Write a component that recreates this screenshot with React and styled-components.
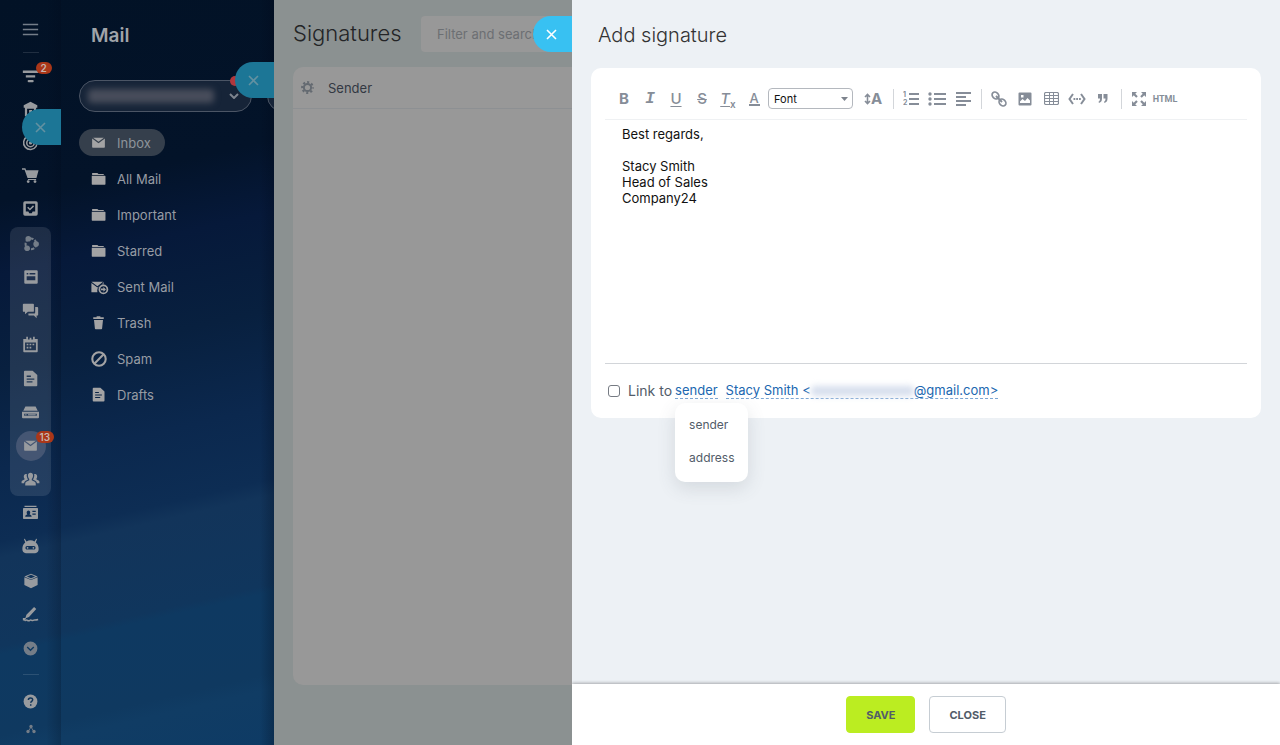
import React from 'react'

// package
import styled, { createGlobalStyle, css } from 'styled-components';


const sans = `Inter, "Liberation Sans", sans-serif`;

// left menu icons, all on a 20 x 20 grid
const icons = {
  menu: <path d="M1 4h18M1 10h18M1 16h18" stroke="currentColor" strokeWidth="1.8" fill="none" />,
  filter: <path d="M1 3h18v2.8H1zM4.500 8.500h11v2.600h-11zM8 14h4.400a1.300 1.300 0 0 1 0 2.800H8a1.300 1.300 0 0 1 0-2.800z" />,
  office: <path d="M10 1l8 4v3h-1.4v10H3.4V8H2V5zM6 9v7h8V9zM8.4 10.5h3.4v5.5H8.4z" fillRule="evenodd" />,
  target: (
    <g fill="none" stroke="currentColor" strokeWidth="1.8">
      <path d="M13.5 3A8 8 0 1 0 17.4 7.4" />
      <circle cx="10" cy="10.500" r="4.400" />
      <circle cx="10" cy="10.500" r="1" />
      <path d="M10 10.500L17 3.500M15 2v3.500h3.500" />
    </g>
  ),
  cart: <path d="M0 1.500h4l.8 2.200H19.500L17 13H6.500L3 3.300H0zM7 14h9.600v1.400H7zM5.600 17.200a1.700 1.700 0 1 1 3.400 0 1.700 1.700 0 0 1-3.400 0zM13.600 17.200a1.700 1.700 0 1 1 3.400 0 1.700 1.700 0 0 1-3.400 0z" />,
  tasks: <path d="M3.500 1.500h13a2 2 0 0 1 2 2v13a2 2 0 0 1-2 2h-13a2 2 0 0 1-2-2v-13a2 2 0 0 1 2-2zM4.500 4.500v9h3l1 2h3l1-2h3v-9zM7.300 8l2 2 3.700-3.700 1.200 1.200-4.900 4.900-3.200-3.200z" fillRule="evenodd" />,
  collab: (
    <g>
      <circle cx="10.500" cy="10.500" r="6.300" fill="none" stroke="currentColor" strokeWidth="2.400" strokeDasharray="4 1.600" />
      <circle cx="7.400" cy="4.400" r="3.300" />
      <circle cx="16.600" cy="10.600" r="3.300" />
      <circle cx="6" cy="15.600" r="3.300" />
    </g>
  ),
  feed: <path d="M3 1.500h14a1.400 1.400 0 0 1 1.400 1.400v14.200a1.400 1.400 0 0 1-1.400 1.400H3a1.400 1.400 0 0 1-1.400-1.400V2.900A1.400 1.400 0 0 1 3 1.500zM4.600 5v1.800h2V5zm3.600 0v1.800h7.200V5zM4.600 9v5h10.800V9z" fillRule="evenodd" />,
  chat: <path d="M2 2h11a1 1 0 0 1 1 1v7.500a1 1 0 0 1-1 1H7L3.500 14.500v-3H2a1 1 0 0 1-1-1V3a1 1 0 0 1 1-1zM15.500 6H18a1 1 0 0 1 1 1v8a1 1 0 0 1-1 1h-.800v3L14 16H8.500a1 1 0 0 1-1-1v-1.600h7a1 1 0 0 0 1-1z" />,
  calendar: <path d="M5 1h2v3h2V2h2v2h2V1h2v2.500h3.500V18a1 1 0 0 1-1 1h-15a1 1 0 0 1-1-1V3.500H5zM3.600 7.500v9.400h12.800V7.500zM5.500 9h2v2h-2zm3.400 0h2v2h-2zm3.500 0h2v2h-2zM5.500 12.600h2v2h-2zm3.400 0h2v2h-2z" fillRule="evenodd" />,
  doc: <path d="M3.500 1h9L18 6v12a1.200 1.200 0 0 1-1.200 1.200H3.500A1.200 1.200 0 0 1 2.300 18V2.200A1.200 1.200 0 0 1 3.500 1zM5.500 6.600v1.500h5V6.600zm0 3.300v1.500h9V9.900zm0 3.400v1.500h6.800v-1.500z" fillRule="evenodd" />,
  drive: <path d="M4 3h12l2.500 5h-17zM0 9h20v6.500a1.200 1.200 0 0 1-1.200 1.200H1.200A1.200 1.200 0 0 1 0 15.500zm2.600 2.400v2.400h14.800v-2.400zm1.200.6h1.500v1.200H3.800zm3.300 0h9v1.200h-9z" fillRule="evenodd" />,
  mail: <path d="M1.500 4.500L10 11l8.500-6.500V16a1 1 0 0 1-1 1h-15a1 1 0 0 1-1-1zM2.800 3.500h14.400L10 9z" />,
  people: <path d="M7 5.200C7 3 8.200 2 10 2s3 1 3 3.200c0 1.800-.7 3.300-1.500 4.100v1.500l3.500 1.900c.8.500 1.200 1.300 1.200 2.300v2H3.800v-2c0-1 .4-1.800 1.200-2.300l3.500-1.900V9.300C7.700 8.500 7 7 7 5.200zM5.700 3.600c-.5 2.200.1 4.700 1.400 6.300L4 11.700c-1 .6-1.500 1.500-1.600 2.700H-.5v-1.700c0-.7.4-1.300 1-1.600l2.400-1.200V8.700C1.800 7.600 1.700 3.700 4.400 3.400zM14.300 3.600c.5 2.200-.1 4.700-1.400 6.300l3.100 1.800c1 .6 1.500 1.500 1.600 2.700h2.900v-1.700c0-.7-.4-1.300-1-1.600l-2.400-1.200V8.700c1.100-1.100 1.200-5-1.500-5.300z" />,
  contact: <path d="M2 1h16v1.800H2zM1 4h18a1 1 0 0 1 1 1v12.500a1 1 0 0 1-1 1H1a1 1 0 0 1-1-1V5a1 1 0 0 1 1-1zM3 15.500h8.500c0-2-1-2.300-2.800-3 1.700-1.800 1-5.300-1.400-5.300S4.100 10.700 5.800 12.500c-1.800.700-2.800 1-2.800 3zM12.500 7.500v1.800H17V7.500zm0 3.800v1.800H17v-1.800z" fillRule="evenodd" />,
  robot: <path d="M3.300.800l2 3.400a9 9 0 0 1 9.400 0l2-3.400 1 .5-1.500 4.100c2.200 1.800 3.400 4.600 3.400 7.600 0 3-1.600 4.800-4.100 4.800h-11C2 17.800.400 16 .400 13c0-3 1.200-5.800 3.400-7.600L2.300 1.300zM6 9.400c-2.600 0-2.600 4.200 0 4.200h8c2.600 0 2.600-4.200 0-4.200zm.6 1.100a1 1 0 1 1 0 2 1 1 0 0 1 0-2zm6.800 0a1 1 0 1 1 0 2 1 1 0 0 1 0-2z" fillRule="evenodd" />,
  box: <path d="M10 1l8.300 3.300L10 8 1.700 4.300zM10 2.200L4.800 4.300 10 6.600l5.200-2.300zM1.700 5.200L10 8.900l8.300-3.700v9.800L10 19l-8.300-4z" fillRule="evenodd" />,
  sign: (
    <g>
      <path d="M14.200 1.200l2.600 2.400-8.600 9.200-4.400 1.800 1.400-4.200zM1 14h4l-2 3H1z" />
      <path d="M3 17.500c3-3 4 1.500 6-.500s2.500 1 4 0 2 .200 6-1" stroke="currentColor" strokeWidth="1.800" fill="none" />
    </g>
  ),
  more: <path d="M10 .800a9.200 9.200 0 1 1 0 18.400A9.200 9.200 0 0 1 10 .800zM6.200 7.300L5 8.600l5 4.900 5-4.900-1.200-1.300L10 11z" fillRule="evenodd" />,
  help: (
    <g>
      <circle cx="10" cy="10" r="9.200" />
      <path d="M7.200 8c0-3.800 5.800-3.600 5.700-.3 0 2-2.600 2.100-2.600 4.100M10.300 13.600v2.200" stroke="#0f3459" strokeWidth="2" fill="none" />
    </g>
  ),
  tree: (
    <g>
      <path d="M10 6L5 14M10 6l5 8" stroke="currentColor" strokeWidth="1.800" />
      <circle cx="10" cy="5" r="3.300" />
      <circle cx="4" cy="15" r="3.300" />
      <circle cx="16" cy="15" r="3.300" />
    </g>
  ),
  folder: <path d="M1.500 2.500h7L10 4h7v1.300H1.500zM1 6.300h17.500a.8.800 0 0 1 .8.800v10.300a.8.800 0 0 1-.8.800H1.800a.8.800 0 0 1-.8-.8z" />,
  sent: (
    <g>
      <path d="M.5 3.500h14.700L8 9zM.5 5L8 10.700 12 8c-3.500 1.500-4.800 4.800-4 8.500H.5zM15.700 3.500v3.300l-1.700.1z" />
      <circle cx="15.500" cy="13" r="5" fill="none" stroke="currentColor" strokeWidth="2.200" />
      <path d="M12.500 12h3v-2l3.200 3-3.200 3v-2h-3z" />
    </g>
  ),
  trash: <path d="M7.500 1.500h5V3H17v2.300H3V3h4.500zM4 6.500h12L14.800 18a1 1 0 0 1-1 .9H6.200a1 1 0 0 1-1-.9z" />,
  spam: <g fill="none" stroke="currentColor" strokeWidth="2.600"><circle cx="10" cy="10" r="8.400" /><path d="M4.500 15.500l11-11" /></g>,
};

const Icon = ({ name, size = 18 }) => (
  <svg width={size} height={size} viewBox="0 0 20 20" fill="currentColor" overflow="visible" aria-hidden="true">
    {icons[name]}
  </svg>
);

const topTools = [
  { name: 'filter', label: 'Pipeline', count: 2 },
  { name: 'office', label: 'Company' },
  { name: 'target', label: 'CRM' },
  { name: 'cart', label: 'Shop' },
  { name: 'tasks', label: 'Tasks' },
];
const groupTools = [
  { name: 'collab', label: 'Collaboration', dim: true },
  { name: 'feed', label: 'Feed', size: 16 },
  { name: 'chat', label: 'Messenger' },
  { name: 'calendar', label: 'Calendar' },
  { name: 'doc', label: 'Documents' },
  { name: 'drive', label: 'Drive' },
  { name: 'mail', label: 'Webmail', count: 13, active: true },
  { name: 'people', label: 'Workgroups' },
];
const bottomTools = [
  { name: 'contact', label: 'Contacts', size: 15 },
  { name: 'robot', label: 'Automation' },
  { name: 'box', label: 'Inventory', size: 16 },
  { name: 'sign', label: 'e-Signature' },
  { name: 'more', label: 'More', dim: true, size: 15 },
];
const folders = [
  { name: 'mail', label: 'Inbox', active: true },
  { name: 'folder', label: 'All Mail' },
  { name: 'folder', label: 'Important' },
  { name: 'folder', label: 'Starred' },
  { name: 'sent', label: 'Sent Mail', size: 16 },
  { name: 'trash', label: 'Trash' },
  { name: 'spam', label: 'Spam', size: 16 },
  { name: 'doc', label: 'Drafts' },
];

const Tool = ({ name, label, count, active, dim, short, size = 17 }) => (
  <ToolSlot $short={short}>
    <ToolButton type="button" aria-label={label} $active={active} $dim={dim}>
      <Icon name={name} size={active ? 15 : size} />
      {count && <Count>{count}</Count>}
    </ToolButton>
  </ToolSlot>
);

const CloseTab = ({ top, dim }) => (
  <Tab type="button" aria-label="Close" $top={top} $dim={dim}>
    <svg width="11" height="11" viewBox="0 0 11 11" fill="none" stroke="currentColor" strokeWidth="1.600">
      <path d="M1 1l9 9M10 1l-9 9" />
    </svg>
  </Tab>
);

const MainMenu = () => (
  <Rail>
    <Tool name="menu" label="Menu" dim />
    <RailLine />
    <Tools>{topTools.map((item) => <Tool key={item.name} {...item} />)}</Tools>
    <ToolGroup>{groupTools.map((item) => <Tool key={item.name} {...item} />)}</ToolGroup>
    <Tools $loose>{bottomTools.map((item) => <Tool key={item.name} {...item} />)}</Tools>
    <RailLine $last />
    <Tools>
      <Tool name="help" label="Help" size={15} short />
      <Tool name="tree" label="Sitemap" size={10} dim short />
    </Tools>
    <CloseTab top={109} dim />
  </Rail>
);

const MailMenu = () => (
  <MailColumn>
    <MailTitle>Mail</MailTitle>
    <AccountRow>
      <Account type="button" aria-label="Mailbox">
        <Hidden $dark />
        <svg width="10" height="6" viewBox="0 0 10 6" fill="none" stroke="currentColor" strokeWidth="2"><path d="M1 1l4 4 4-4" /></svg>
        <Dot />
      </Account>
      <NextPill />
    </AccountRow>
    <Folders>
      {folders.map(({ name, label, active, size = 15 }) => (
        <li key={label}>
          <Folder href="#" $active={active}>
            <FolderIcon><Icon name={name} size={size} /></FolderIcon>
            {label}
          </Folder>
        </li>
      ))}
    </Folders>
    <CloseTab top={62} dim />
  </MailColumn>
);

const Signatures = () => (
  <ListColumn>
    <ListHeader>
      <ListTitle>Signatures</ListTitle>
      <Search type="search" placeholder="Filter and search" aria-label="Filter and search" />
    </ListHeader>
    <ListCard>
      <ListHead>
        <svg width="13" height="13" viewBox="0 0 13 13" fill="none" stroke="currentColor">
          <circle cx="6.500" cy="6.500" r="3.600" strokeWidth="2" />
          <circle cx="6.500" cy="6.500" r="5.400" strokeWidth="2" strokeDasharray="2.100 2.140" strokeDashoffset="1" />
        </svg>
        Sender
      </ListHead>
    </ListCard>
    <CloseTab top={16} />
  </ListColumn>
);

const Draw = ({ w = 18, h = 16, children }) => (
  <svg width={w} height={h} viewBox={`0 0 ${w} ${h}`} fill="none" stroke="currentColor" aria-hidden="true">{children}</svg>
);

const Toolbar = () => (
  <Bar role="toolbar" aria-label="Formatting">
    <BarButton type="button" aria-label="Bold"><Letter $bold>B</Letter></BarButton>
    <BarButton type="button" aria-label="Italic"><Letter $serif>I</Letter></BarButton>
    <BarButton type="button" aria-label="Underline"><Letter $line="underline">U</Letter></BarButton>
    <BarButton type="button" aria-label="Strikethrough"><Letter $line="line-through">S</Letter></BarButton>
    <BarButton type="button" aria-label="Remove formatting">
      <Letter $slant $line="underline">T</Letter><Sub>x</Sub>
    </BarButton>
    <BarButton type="button" aria-label="Text color"><ColorLetter>A</ColorLetter></BarButton>
    <FontBox>
      <FontSelect aria-label="Font" defaultValue="Font">
        <option>Font</option>
        <option>Arial</option>
        <option>Verdana</option>
      </FontSelect>
      <svg width="7" height="4" viewBox="0 0 7 4" fill="#7d838d"><path d="M0 0h7L3.500 4z" /></svg>
    </FontBox>
    <BarButton type="button" aria-label="Font size" $wide>
      <Draw w={7} h={12}><path d="M3.500 2v8M1 4l2.500-2.500L6 4M1 8l2.500 2.500L6 8" strokeWidth="1.600" /></Draw>
      <Letter $bold>A</Letter>
    </BarButton>
    <Separator />
    <BarButton type="button" aria-label="Numbered list">
      <Draw w={16}>
        <path d="M6 3h10M6 8h10M6 13h10" strokeWidth="2" />
        <text x="0" y="6" fontSize="7" fontWeight="700" fontFamily={sans} fill="currentColor" stroke="none">1</text>
        <text x="0" y="14" fontSize="7" fontWeight="700" fontFamily={sans} fill="currentColor" stroke="none">2</text>
      </Draw>
    </BarButton>
    <BarButton type="button" aria-label="Bulleted list">
      <Draw>
        <path d="M6 3h12M6 8h12M6 13h12" strokeWidth="2" />
        <g fill="currentColor" stroke="none"><circle cx="2" cy="3" r="1.700" /><circle cx="2" cy="8" r="1.700" /><circle cx="2" cy="13" r="1.700" /></g>
      </Draw>
    </BarButton>
    <BarButton type="button" aria-label="Align">
      <Draw w={15}><path d="M0 2h15M0 6h10M0 10h15M0 14h10" strokeWidth="2" /></Draw>
    </BarButton>
    <Separator />
    <BarButton type="button" aria-label="Link">
      <Draw w={16}>
        <ellipse cx="4.500" cy="4.500" rx="3" ry="3.800" transform="rotate(-45 4.500 4.500)" strokeWidth="1.700" />
        <ellipse cx="11.500" cy="11.500" rx="3" ry="3.800" transform="rotate(-45 11.500 11.500)" strokeWidth="1.700" />
        <path d="M5 5l6 6" strokeWidth="1.900" />
      </Draw>
    </BarButton>
    <BarButton type="button" aria-label="Image">
      <Draw w={14} h={14}>
        <path d="M1.500.500h11a1 1 0 0 1 1 1v11a1 1 0 0 1-1 1h-11a1 1 0 0 1-1-1v-11a1 1 0 0 1 1-1zM2 11h10V8.500L9.500 6 7 9 4.500 7 2 9.500zM3 3v2.500h2.500V3z" fill="currentColor" fillRule="evenodd" stroke="none" />
      </Draw>
    </BarButton>
    <BarButton type="button" aria-label="Table">
      <Draw w={15} h={13}>
        <rect x=".500" y=".500" width="14" height="12" rx="1.500" strokeWidth="1.200" />
        <path d="M5.500 1v11M9.500 1v11M1 3.500h13M1 6.500h13M1 9.500h13" />
      </Draw>
    </BarButton>
    <BarButton type="button" aria-label="Code">
      <Draw h={12}>
        <path d="M5 1L1.500 6 5 11M13 1l3.500 5-3.500 5" strokeWidth="2" />
        <path d="M5.500 6h1.800M8.200 6H10M11 6h1.800" strokeWidth="1.900" />
      </Draw>
    </BarButton>
    <BarButton type="button" aria-label="Quote">
      <Draw w={10} h={9}>
        <path d="M0 0h4v4.500C4 7 3 8.300 1 9L.500 7.700C1.700 7.200 2 6.200 2 4.500H0zM5.500 0h4v4.500C9.500 7 8.500 8.300 6.500 9L6 7.700c1.200-.5 1.500-1.500 1.500-3.200h-2z" fill="currentColor" stroke="none" />
      </Draw>
    </BarButton>
    <Separator />
    <BarButton type="button" aria-label="Full screen">
      <Draw w={14} h={14}>
        <path d="M1 1l4 4M13 1L9 5M1 13l4-4M13 13L9 9" strokeWidth="2.200" />
        <path d="M0 0h5L0 5zM14 0H9l5 5zM0 14h5L0 9zM14 14H9l5-5z" fill="currentColor" stroke="none" />
      </Draw>
    </BarButton>
    <BarButton type="button"><Html>HTML</Html></BarButton>
  </Bar>
);

const App = () => {
  return (
    <Page>
      <GlobalStyle />
      <Backdrop>
        <MainMenu />
        <MailMenu />
      </Backdrop>
      <Signatures />
      <Panel>
        <PanelTitle>Add signature</PanelTitle>
        <Card>
          <Toolbar />
          <Editor
            aria-label="Signature text"
            defaultValue={"Best regards,\n\nStacy Smith\nHead of Sales\nCompany24"}
          />
          <LinkRow>
            <Check type="checkbox" id="link-to" />
            <label htmlFor="link-to">Link to</label>
            <Anchor>
              <Dashed href="#">sender</Dashed>
              <Menu>
                <MenuItem type="button">sender</MenuItem>
                <MenuItem type="button">address</MenuItem>
              </Menu>
            </Anchor>
            <Dashed href="#" $gap>Stacy Smith &lt;<Hidden />@gmail.com&gt;</Dashed>
          </LinkRow>
        </Card>
        <Footer>
          <Action type="button" $primary>SAVE</Action>
          <Action type="button">CLOSE</Action>
        </Footer>
      </Panel>
    </Page>
  )
}

export default App

const GlobalStyle = createGlobalStyle`
  * { box-sizing: border-box; }
  body {
    margin: 0;
    font-family: ${sans};
    font-size: 13px;
    color: #525c69;
  }
  button, input, select, textarea { font-family: inherit; margin: 0; }
  button { cursor: pointer; }
  svg { display: block; flex-shrink: 0; }
`;
const Page = styled.div`
  display: flex;
  min-height: 100vh;
`;
const Backdrop = styled.div`
  display: flex;
  background: linear-gradient(167deg, #021226 0%, #031329 25%, #06193a 34%, #08203f 46%, #0b284e 58%, #0d2d54 67%, #12345a 69%, #10365d 80%, #0e3961 81%, #0f3960 91%, #103c64 93%, #0e3b65 100%);
`;
const Rail = styled.nav`
  position: relative;
  display: flex;
  flex-direction: column;
  align-items: center;
  width: 61px;
  padding-top: 13px;
  background: linear-gradient(to right, transparent 46px, rgba(0, 8, 24, 0.22));
`;
const Tools = styled.div`
  display: flex;
  flex-direction: column;
  gap: ${({ $loose }) => ($loose ? '1px' : '0')};
`;
const ToolGroup = styled(Tools)`
  justify-content: space-between;
  width: 41px;
  height: 269px;
  margin: 2px 0 0;
  border-radius: 8px;
  background: rgba(255, 255, 255, 0.1);
`;
const ToolSlot = styled.div`
  display: flex;
  align-items: center;
  justify-content: center;
  height: ${({ $short }) => ($short ? '28px' : '33px')};
`;
const ToolButton = styled.button`
  position: relative;
  display: flex;
  align-items: center;
  justify-content: center;
  width: 30px;
  height: 30px;
  padding: 0;
  border: 0;
  border-radius: 50%;
  color: ${({ $dim }) => ($dim ? '#747d88' : '#989b9f')};
  background: ${({ $active }) => ($active ? '#455673' : 'none')};
`;
const Count = styled.span`
  position: absolute;
  top: 0;
  left: 20px;
  min-width: 16px;
  padding: 0 4px;
  border-radius: 6px;
  background: #aa3719;
  color: #c8b4ae;
  font-size: 10px;
  font-weight: 600;
  line-height: 12px;
`;
const RailLine = styled.div`
  width: 16px;
  height: 1px;
  margin: ${({ $last }) => ($last ? '9px 0 12px' : '6px 0 7px')};
  background: rgba(255, 255, 255, 0.12);
`;
const Tab = styled.button`
  position: absolute;
  top: ${({ $top }) => $top}px;
  right: 0;
  z-index: 1;
  display: flex;
  align-items: center;
  width: 39px;
  height: 36px;
  padding: 0 0 0 13px;
  border: 0;
  border-radius: 18px 0 0 18px;
  color: ${({ $dim }) => ($dim ? '#6391a1' : '#fff')};
  background: ${({ $dim }) => ($dim ? '#1c7696' : '#38c1f2')};
`;
const MailColumn = styled.aside`
  position: relative;
  width: 213px;
  padding: 22px 0 0 18px;
  overflow: hidden;
  background: linear-gradient(to left, rgba(0, 8, 24, 0.28), transparent 14px);
`;
const MailTitle = styled.h1`
  margin: 0 0 30px 12px;
  color: #a0a4a9;
  font-size: 19px;
  font-weight: 600;
  line-height: 28px;
`;
const AccountRow = styled.div`
  display: flex;
  gap: 15px;
`;
const pill = css`
  flex-shrink: 0;
  height: 32px;
  border: 1px solid #4b5565;
  border-radius: 16px;
  background: #162438;
`;
const Account = styled.button`
  ${pill}
  position: relative;
  display: flex;
  align-items: center;
  justify-content: space-between;
  width: 173px;
  padding: 0 12px 0 8px;
  color: #7d848e;
`;
const NextPill = styled.div`
  ${pill}
  width: 60px;
`;
const Dot = styled.span`
  position: absolute;
  top: -5px;
  right: 11px;
  width: 10px;
  height: 10px;
  border-radius: 50%;
  background: #b0373d;
`;
const Hidden = styled.span`
  display: inline-block;
  width: ${({ $dark }) => ($dark ? '126px' : '103px')};
  height: ${({ $dark }) => ($dark ? '14px' : '10px')};
  border-radius: 4px;
  background: ${({ $dark }) => ($dark ? '#484d5b' : '#d6deed')};
  filter: blur(3px);
  vertical-align: middle;
`;
const Folders = styled.ul`
  display: flex;
  flex-direction: column;
  align-items: flex-start;
  gap: 9px;
  margin: 17px 0 0;
  padding: 0;
  list-style: none;
`;
const Folder = styled.a`
  display: flex;
  align-items: center;
  height: 27px;
  padding: 0 14px 0 12px;
  border-radius: 14px;
  color: ${({ $active }) => ($active ? '#8e949b' : '#979ca4')};
  background: ${({ $active }) => ($active ? '#353f4c' : 'none')};
  text-decoration: none;
`;
const FolderIcon = styled.span`
  width: 26px;
  color: #a3a3a4;
`;
const ListColumn = styled.section`
  position: relative;
  display: flex;
  flex-direction: column;
  width: 298px;
  padding: 16px 0 60px 19px;
  background: #8b9191;
`;
const ListHeader = styled.header`
  display: flex;
  align-items: center;
  gap: 20px;
`;
const title = css`
  margin: 0;
  font-weight: 300;
  line-height: 36px;
  white-space: nowrap;
`;
const ListTitle = styled.h2`
  ${title}
  width: 108px;
  padding-bottom: 2px;
  font-size: 22px;
  line-height: 34px;
  color: #232426;
`;
const Search = styled.input`
  flex: 1;
  min-width: 0;
  height: 36px;
  padding: 0 16px;
  border: 0;
  border-radius: 4px 0 0 4px;
  background: #989898;
  font-size: 13px;
  &::placeholder { color: #6c6f73; }
`;
const ListCard = styled.div`
  flex: 1;
  margin-top: 15px;
  border-radius: 10px 0 0 10px;
  background: #989898;
`;
const ListHead = styled.div`
  display: flex;
  align-items: center;
  gap: 14px;
  height: 42px;
  padding-left: 8px;
  border-bottom: 1px solid #8d9093;
  color: #333943;
  svg { color: #646a71; }
`;
const Panel = styled.main`
  display: flex;
  flex: 1;
  flex-direction: column;
  min-width: 0;
  background: #edf1f5;
`;
const PanelTitle = styled.h2`
  ${title}
  padding: 17px 26px 15px;
  font-size: 20px;
  color: #333;
`;
const Card = styled.div`
  margin: 0 19px;
  padding: 10px 14px 0;
  border-radius: 10px;
  background: #fff;
`;
const Bar = styled.div`
  display: flex;
  align-items: center;
  height: 42px;
  padding-left: 6px;
  border-bottom: 1px solid #eff1f3;
`;
const BarButton = styled.button`
  display: flex;
  flex-shrink: 0;
  align-items: center;
  justify-content: center;
  width: ${({ $wide }) => ($wide ? '30px' : '26px')};
  height: 26px;
  padding: 0;
  border: 0;
  background: none;
  color: #868d98;
`;
const Letter = styled.span`
  font-size: 15px;
  font-weight: ${({ $bold }) => ($bold ? 700 : 500)};
  line-height: 20px;
  text-decoration: ${({ $line }) => $line || 'none'};
  text-decoration-thickness: 1px;
  text-underline-offset: 2px;
  ${({ $slant }) => $slant && 'font-style: italic;'}
  ${({ $serif }) => $serif && 'font: italic 700 16px/20px "Liberation Mono", monospace;'}
`;
const Sub = styled.span`
  align-self: flex-end;
  font-size: 10px;
  font-weight: 600;
  line-height: 16px;
`;
const ColorLetter = styled.span`
  width: 11px;
  border-bottom: 2px solid;
  font-size: 13px;
  font-weight: 500;
  line-height: 12px;
`;
const FontBox = styled.div`
  display: flex;
  align-items: center;
  width: 85px;
  height: 21px;
  margin: 0 5px 0 1px;
  padding-right: 4px;
  border: 1px solid #b4b8be;
  border-radius: 4px;
`;
const FontSelect = styled.select`
  flex: 1;
  min-width: 0;
  padding: 0 5px;
  border: 0;
  background: none;
  appearance: none;
  color: #111;
  font-size: 11px;
`;
const Separator = styled.span`
  width: 1px;
  height: 20px;
  margin: 0 4px 0 5px;
  background: #d3d6da;
`;
const Html = styled.span`
  font: 700 9px/12px Roboto, sans-serif;
`;
const Editor = styled.textarea`
  display: block;
  width: 100%;
  height: 244px;
  padding: 6px 17px;
  border: 0;
  border-bottom: 1px solid #d2d5d9;
  outline: 0;
  resize: none;
  color: #111;
  font-size: 13px;
  line-height: 16px;
`;
const LinkRow = styled.div`
  display: flex;
  align-items: center;
  height: 54px;
  padding-left: 3px;
  font-size: 13px;
  label {
    margin: 0 3px 0 8px;
    font-size: 14px;
    line-height: 18px;
  }
`;
const Check = styled.input`
  width: 12px;
  height: 12px;
  appearance: none;
  border: 1px solid #767b83;
  border-radius: 3px;
  background: #fff;
`;
const Anchor = styled.span`
  position: relative;
`;
const Dashed = styled.a`
  display: block;
  margin-left: ${({ $gap }) => ($gap ? '8px' : '0')};
  border-bottom: 1px dashed #7ba6d4;
  color: #2067b0;
  line-height: 15px;
  text-decoration: none;
  white-space: nowrap;
`;
const Menu = styled.div`
  position: absolute;
  top: 20px;
  left: 0;
  display: flex;
  flex-direction: column;
  padding: 5px 0 8px;
  border-radius: 10px;
  background: #fff;
  box-shadow: 0 6px 18px rgba(83, 92, 105, 0.16);
`;
const MenuItem = styled.button`
  height: 33px;
  padding: 0 14px;
  border: 0;
  background: none;
  color: #525c69;
  font-size: 12px;
  text-align: left;
`;
const Footer = styled.footer`
  display: flex;
  align-items: center;
  justify-content: center;
  gap: 14px;
  height: 61px;
  margin-top: auto;
  background: #fff;
  box-shadow: 0 -1px 3px rgba(0, 0, 0, 0.3);
`;
const Action = styled.button`
  height: 37px;
  padding: 0 19px;
  border: 1px solid ${({ $primary }) => ($primary ? '#bbed21' : '#c6cdd3')};
  border-radius: 4px;
  background: ${({ $primary }) => ($primary ? '#bbed21' : '#fff')};
  color: #525c69;
  font-size: 11px;
  font-weight: 700;
`;
